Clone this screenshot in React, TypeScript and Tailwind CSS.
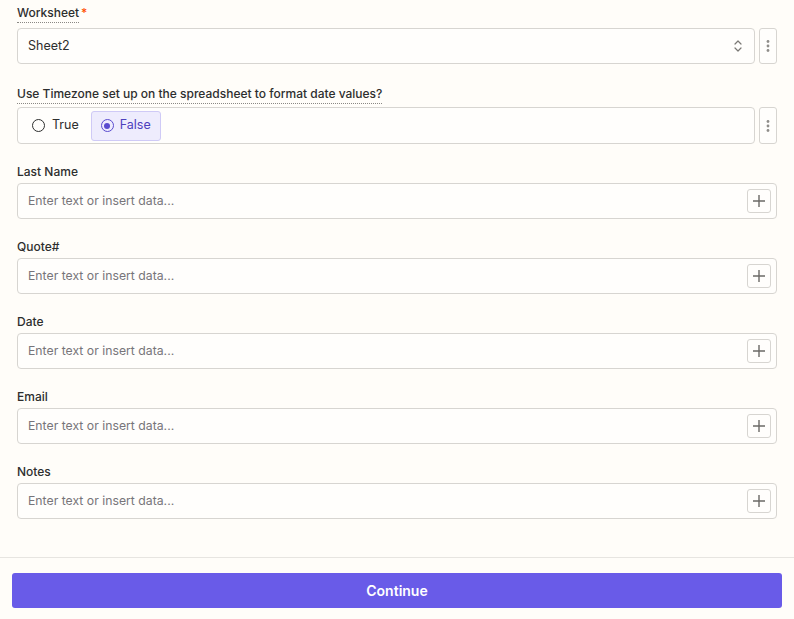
import React from "react";

const font = { fontFamily: "Inter, 'Noto Sans', sans-serif" };

function Kebab() {
  return (
    <button className="flex w-[18px] shrink-0 items-center justify-center rounded-[3px] border border-[#d7d5d1] bg-[#fffefc]">
      <svg width="4" height="14" viewBox="0 0 4 14" fill="#8f8d89">
        <circle cx="2" cy="2.5" r="1.4" />
        <circle cx="2" cy="7" r="1.4" />
        <circle cx="2" cy="11.5" r="1.4" />
      </svg>
    </button>
  );
}

function PlusButton() {
  return (
    <div className="flex h-[24px] w-[24px] items-center justify-center rounded-[3px] border border-[#d7d5d1] bg-[#fffefc]">
      <svg width="14" height="14" viewBox="0 0 14 14" stroke="#6b6966" strokeWidth="1.4" fill="none">
        <path d="M7 1v12M1 7h12" />
      </svg>
    </div>
  );
}

function TextField({ label }: { label: string }) {
  return (
    <div className="mt-[20px] flex flex-col">
      <div className="mb-[3px] text-[12px] font-medium leading-[16px] text-[#2d2e2e]">{label}</div>
      <div className="flex h-[36px] items-center justify-between rounded-[4px] border border-[#d7d5d1] bg-[#fffefc] pl-[10px] pr-[5px]">
        <span className="text-[12.25px] text-[#77757a]">Enter text or insert data...</span>
        <PlusButton />
      </div>
    </div>
  );
}

export default function App() {
  return (
    <div className="flex h-[619px] w-[794px] flex-col bg-[#fffdf9]" style={font}>
      <div className="flex flex-1 flex-col px-[17px] pt-[5px]">
        {/* Worksheet select */}
        <div className="flex flex-col">
          <div className="mb-[5px] flex items-start text-[12px] font-medium leading-[16px] text-[#2d2e2e]">
            <span className="border-b border-dotted border-[#8a8884] pb-[1px]">Worksheet</span>
            <span className="ml-[2px] text-[#ff4f00]">*</span>
          </div>
          <div className="flex h-[36px] gap-[4px]">
            <div className="flex flex-1 items-center justify-between rounded-[4px] border border-[#d7d5d1] bg-[#fffefc] pl-[10px] pr-[12px]">
              <span className="text-[12.5px] text-[#2d2e2e]">Sheet2</span>
              <svg width="8" height="14" viewBox="0 0 8 14" fill="none" stroke="#7a7874" strokeWidth="1.2" strokeLinecap="round" strokeLinejoin="round">
                <path d="M1 5l3-3 3 3M1 9l3 3 3-3" />
              </svg>
            </div>
            <Kebab />
          </div>
        </div>

        {/* Timezone radio */}
        <div className="mt-[22px] flex flex-col">
          <div className="mb-[3px] flex text-[12px] font-medium leading-[16px] text-[#2d2e2e]">
            <span className="border-b border-dotted border-[#8a8884] pb-[1px]">
              Use Timezone set up on the spreadsheet to format date values?
            </span>
          </div>
          <div className="flex h-[37px] gap-[4px]">
            <div className="flex flex-1 items-center gap-[1px] rounded-[4px] border border-[#d7d5d1] bg-[#fffefc] px-[3px]">
              <div className="flex h-[30px] items-center gap-[7px] px-[11px] text-[12.5px] text-[#2d2e2e]">
                <span className="h-[13px] w-[13px] rounded-full border-[1.5px] border-[#2d2e2e]" />
                True
              </div>
              <div className="flex h-[30px] items-center gap-[6px] rounded-[3px] border border-[#cfcaf6] bg-[#eeecfd] px-[9px] text-[12.5px] text-[#4d40bd]">
                <span className="flex h-[13px] w-[13px] items-center justify-center rounded-full border-[1.5px] border-[#5a4ccf]">
                  <span className="h-[6px] w-[6px] rounded-full bg-[#5a4ccf]" />
                </span>
                False
              </div>
            </div>
            <Kebab />
          </div>
        </div>

        <TextField label="Last Name" />
        <TextField label="Quote#" />
        <TextField label="Date" />
        <TextField label="Email" />
        <TextField label="Notes" />
      </div>

      <div className="h-[62px] border-t border-[#e7e5e1] px-[12px] pt-[15px]">
        <button className="flex h-[35px] w-full items-center justify-center rounded-[3px] bg-[#695be8] text-[14px] font-semibold text-white">
          Continue
        </button>
      </div>
    </div>
  );
}
